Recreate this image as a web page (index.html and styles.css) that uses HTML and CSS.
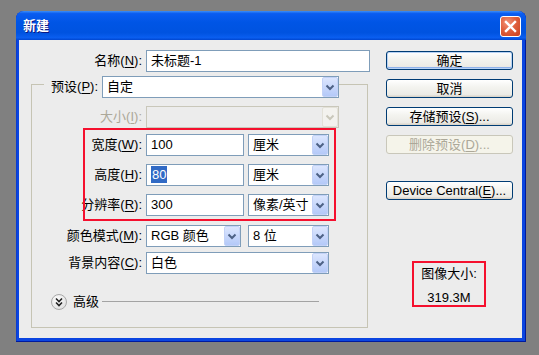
FILE: index.html
```html
<!DOCTYPE html>
<html lang="zh-CN">
<head>
    <meta charset="UTF-8">
    <title>新建</title>
    <link rel="stylesheet" href="styles.css">
</head>
<body>
    <div class="window">
        <div class="titlebar">
            <span class="title">新建</span>
            <span class="close">
                <svg width="19" height="19" viewBox="0 0 19 19"><path d="M5 5 L14 14 M14 5 L5 14" stroke="#fff" stroke-width="2.4" stroke-linecap="square"/></svg>
            </span>
        </div>
        <div class="client">
            <div class="form">
                <div class="row">
                    <label class="lbl">名称(<u>N</u>):</label>
                    <div class="field name">未标题-1</div>
                </div>

                <div class="group">
                    <div class="row preset-row">
                        <label class="lbl head">预设(<u>P</u>):</label>
                        <div class="combo preset"><span>自定</span><i class="arrow"><svg width="14" height="18" viewBox="0 0 14 18"><path d="M3.5 7.5 L7 11 L10.5 7.5" fill="none" stroke="#4d6185" stroke-width="2"/></svg></i></div>
                    </div>

                    <div class="row size-row">
                        <label class="lbl off">大小(<u>I</u>):</label>
                        <div class="combo size disabled"><span></span><i class="arrow"><svg width="14" height="18" viewBox="0 0 14 18"><path d="M3.5 7.5 L7 11 L10.5 7.5" fill="none" stroke="#c9c7ba" stroke-width="2"/></svg></i></div>
                    </div>

                    <div class="dims">
                        <div class="row">
                            <label class="lbl">宽度(<u>W</u>):</label>
                            <div class="field num">100</div>
                            <div class="combo unit"><span>厘米</span><i class="arrow"><svg width="14" height="18" viewBox="0 0 14 18"><path d="M3.5 7.5 L7 11 L10.5 7.5" fill="none" stroke="#4d6185" stroke-width="2"/></svg></i></div>
                        </div>
                        <div class="row gap8">
                            <label class="lbl">高度(<u>H</u>):</label>
                            <div class="field num"><span class="sel">80</span></div>
                            <div class="combo unit"><span>厘米</span><i class="arrow"><svg width="14" height="18" viewBox="0 0 14 18"><path d="M3.5 7.5 L7 11 L10.5 7.5" fill="none" stroke="#4d6185" stroke-width="2"/></svg></i></div>
                        </div>
                        <div class="row gap8">
                            <label class="lbl">分辨率(<u>R</u>):</label>
                            <div class="field num">300</div>
                            <div class="combo unit"><span>像素/英寸</span><i class="arrow"><svg width="14" height="18" viewBox="0 0 14 18"><path d="M3.5 7.5 L7 11 L10.5 7.5" fill="none" stroke="#4d6185" stroke-width="2"/></svg></i></div>
                        </div>
                    </div>

                    <div class="row mode-row">
                        <label class="lbl">颜色模式(<u>M</u>):</label>
                        <div class="combo mode"><span>RGB 颜色</span><i class="arrow"><svg width="14" height="18" viewBox="0 0 14 18"><path d="M3.5 7.5 L7 11 L10.5 7.5" fill="none" stroke="#4d6185" stroke-width="2"/></svg></i></div>
                        <div class="combo unit"><span>8 位</span><i class="arrow"><svg width="14" height="18" viewBox="0 0 14 18"><path d="M3.5 7.5 L7 11 L10.5 7.5" fill="none" stroke="#4d6185" stroke-width="2"/></svg></i></div>
                    </div>

                    <div class="row bg-row">
                        <label class="lbl">背景内容(<u>C</u>):</label>
                        <div class="combo bg"><span>白色</span><i class="arrow"><svg width="14" height="18" viewBox="0 0 14 18"><path d="M3.5 7.5 L7 11 L10.5 7.5" fill="none" stroke="#4d6185" stroke-width="2"/></svg></i></div>
                    </div>

                    <div class="advanced">
                        <span class="expand"><svg width="14" height="14" viewBox="0 0 14 14"><path d="M4 3.5 L7 6.5 L10 3.5 M4 7.5 L7 10.5 L10 7.5" fill="none" stroke="#222" stroke-width="1.6"/></svg></span>
                        <span class="adv-text">高级</span>
                        <span class="rule"></span>
                    </div>
                </div>
            </div>

            <div class="side">
                <div class="btn default">确定</div>
                <div class="btn">取消</div>
                <div class="btn">存储预设(<u>S</u>)...</div>
                <div class="btn disabled">删除预设(<u>D</u>)...</div>
                <div class="btn central">Device Central(<u>E</u>)...</div>
                <div class="imgsize">
                    <span>图像大小:</span>
                    <span class="size-val">319.3M</span>
                </div>
            </div>
        </div>
    </div>
</body>
</html>
```

FILE: styles.css
```css
html, body {
    margin: 0;
    width: 539px;
    height: 355px;
    overflow: hidden;
}
body {
    background: #808080;
    font-family: "Liberation Sans", "Noto Sans CJK SC", sans-serif;
    font-size: 13px;
    color: #000;
}
u { text-decoration: underline; text-underline-offset: 2px; }

.window {
    width: 510px;
    height: 331px;
    margin: 11px 0 0 16px;
    background: #0b45e0;
    border-radius: 8px 8px 0 0;
    box-shadow: inset 0 -1px 0 #001a9c, inset -1px 0 0 #001a9c, inset 1px 0 0 #0a3ccf;
    display: flex;
    flex-direction: column;
}
.titlebar {
    height: 29px;
    box-sizing: border-box;
    padding: 0 5px 0 7px;
    display: flex;
    justify-content: space-between;
    border-radius: 8px 8px 0 0;
    background: linear-gradient(to bottom, #3c8ef8 0%, #0a5cf0 9%, #0055e5 40%, #0053e0 75%, #0a5ef0 92%, #0046d0 100%);
}
.title {
    line-height: 29px;
    color: #fff;
    font-weight: bold;
    font-size: 13px;
    text-shadow: 1px 1px #0a1883;
}
.close {
    width: 21px;
    height: 21px;
    margin-top: 5px;
    box-sizing: border-box;
    border: 1px solid #fff;
    border-radius: 3px;
    background: radial-gradient(circle at 35% 30%, #f39478 0%, #e0603d 45%, #c83f1c 100%);
    display: flex;
    align-items: center;
    justify-content: center;
}

.client {
    flex: 1;
    margin: 0 4px 4px 3px;
    background: #ececec;
    display: flex;
    gap: 16px;
    padding: 10px 0 0 12px;
}
.form { width: 339px; }

.row {
    display: flex;
    align-items: center;
    height: 22px;
}
.lbl {
    width: 115px;
    flex: none;
    box-sizing: border-box;
    padding-right: 4px;
    text-align: right;
    line-height: 22px;
    white-space: nowrap;
}
.group .lbl { width: 114px; }
.lbl.off { color: #aca899; }

.field {
    height: 22px;
    box-sizing: border-box;
    border: 1px solid #7f9db9;
    background: #fff;
    padding: 0 4px;
    line-height: 20px;
    flex: none;
}
.field.name { width: 224px; }
.field.num { width: 98px; margin-right: 4px; }
.sel {
    background: #316ac5;
    color: #fff;
    padding: 1px 1px;
}

.combo {
    height: 22px;
    box-sizing: border-box;
    border: 1px solid #7f9db9;
    background: #fff;
    display: flex;
    justify-content: space-between;
    flex: none;
}
.combo span {
    padding-left: 4px;
    line-height: 20px;
    white-space: nowrap;
}
.arrow {
    width: 16px;
    height: 20px;
    box-sizing: border-box;
    border: 1px solid #c3d2f7;
    border-radius: 2px;
    background: linear-gradient(to bottom, #dce6fe, #b4c9f8);
    display: flex;
    align-items: center;
    justify-content: center;
}
.combo.disabled {
    border-color: #c9c7ba;
    background: #ececec;
}
.combo.disabled .arrow {
    border-color: #e3e1d8;
    background: #f3f2ee;
}
.combo.preset { width: 237px; }
.combo.size { width: 193px; }
.combo.unit { width: 81px; }
.combo.mode { width: 95px; margin-right: 7px; }
.combo.bg { width: 183px; }

.group {
    width: 337px;
    height: 244px;
    box-sizing: border-box;
    margin-top: 12px;
    border: 1px solid #c6c4b4;
}
.preset-row { margin-top: -9px; }
.lbl.head {
    width: 58px;
    margin-left: 12px;
    background: #ececec;
}
.size-row { margin-top: 8px; }

.dims {
    position: relative;
    margin-top: 6px;
}
.dims::after {
    content: "";
    position: absolute;
    left: 51px;
    top: -6px;
    width: 253px;
    height: 93px;
    box-sizing: border-box;
    border: 2px solid #f5102e;
    pointer-events: none;
}
.gap8 { margin-top: 8px; }
.mode-row { margin-top: 9px; }
.bg-row { margin-top: 5px; }

.advanced {
    display: flex;
    align-items: center;
    margin-top: 19px;
    padding-left: 19px;
    height: 17px;
}
.expand {
    width: 16px;
    height: 16px;
    box-sizing: border-box;
    border: 1px solid #a9a9a9;
    border-radius: 50%;
    background: radial-gradient(circle at 40% 35%, #ffffff, #e4e4e4 70%, #cfcfcf);
    display: flex;
    align-items: center;
    justify-content: center;
    margin-right: 6px;
}
.adv-text { line-height: 17px; }
.rule {
    width: 217px;
    height: 1px;
    margin-left: 3px;
    background: #a3a3a3;
}

.side {
    width: 127px;
    display: flex;
    flex-direction: column;
}
.btn {
    height: 19px;
    box-sizing: border-box;
    margin-top: 9px;
    border: 1px solid #003c74;
    border-radius: 3px;
    background: linear-gradient(to bottom, #ffffff 0%, #f4f4f0 40%, #ecebe6 85%, #d6d0c5 100%);
    text-align: center;
    line-height: 17px;
    white-space: nowrap;
}
.btn:first-child { margin-top: 1px; }
.btn.default {
    box-shadow: inset 0 0 0 1px #b8d2f4, inset 0 -1px 0 1px #8fb2ec;
}
.btn.disabled {
    border-color: #c9c7ba;
    background: #f5f4ea;
    color: #aca899;
}
.btn.central { margin-top: 27px; }

.imgsize {
    width: 74px;
    height: 46px;
    box-sizing: border-box;
    margin: 61px 0 0 26px;
    border: 2px solid #f5102e;
    display: flex;
    flex-direction: column;
    align-items: center;
    padding-top: 1px;
}
.imgsize span { line-height: 19px; white-space: nowrap; }
.imgsize .size-val { margin-top: 5px; }
```
